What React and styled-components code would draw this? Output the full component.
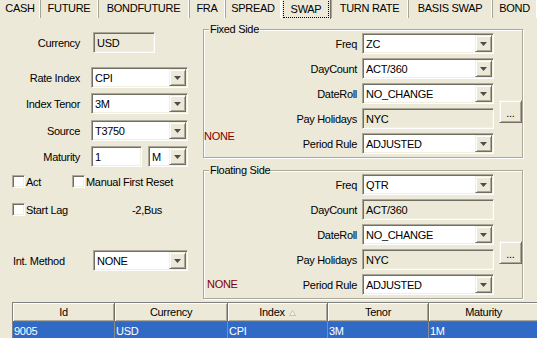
import React from "react";
import styled, { createGlobalStyle } from "styled-components";

const GlobalStyle = createGlobalStyle`
  html, body { margin: 0; padding: 0; background: #ECE9D8; }
  body {
    font-family: "Liberation Sans", Arial, sans-serif;
    font-size: 11px;
    color: #000;
  }
`;

const Window = styled.div`
  width: 537px;
  height: 338px;
  overflow: hidden;
  background: #ECE9D8;
  display: flex;
  flex-direction: column;
  letter-spacing: -0.3px;
`;

/* ---------- tabs ---------- */
const TabStrip = styled.div`
  display: flex;
  height: 19px;
  flex-shrink: 0;
`;

const Tab = styled.div`
  flex: 0 0 ${(p) => p.$w}px;
  box-sizing: border-box;
  height: ${(p) => (p.$selected ? 19 : 18)}px;
  display: flex;
  align-items: center;
  justify-content: center;
  padding-bottom: 2px;
  border-left: 1px solid ${(p) => (p.$first ? "transparent" : p.$selected ? "#fff" : "#A7A593")};
  border-right: 1px solid ${(p) => (p.$selected ? "#716F64" : "#fff")};
  white-space: nowrap;
`;

const Focus = styled.span`
  box-sizing: border-box;
  width: calc(100% - 2px);
  height: 17px;
  margin-top: 1px;
  border: 1px dotted #000;
  border-top: none;
  display: flex;
  align-items: center;
  justify-content: center;
`;

/* ---------- body ---------- */
const Body = styled.div`
  display: flex;
  height: 283px;
  flex-shrink: 0;
`;

const LeftPane = styled.div`
  width: 203px;
  flex-shrink: 0;
  display: flex;
  flex-direction: column;
`;

const FormRow = styled.div`
  display: flex;
  align-items: center;
  height: 21px;
  margin-top: ${(p) => p.$mt}px;
`;

const Label = styled.div`
  box-sizing: border-box;
  width: ${(p) => p.$w || 80}px;
  margin-right: ${(p) => (p.$left ? 0 : 11)}px;
  padding-left: ${(p) => (p.$left ? 13 : 0)}px;
  text-align: ${(p) => (p.$left ? "left" : "right")};
  white-space: nowrap;
`;

const sunken = `
  box-sizing: border-box;
  border: 1px solid;
  border-color: #ACA899 #fff #fff #ACA899;
  box-shadow: inset 1px 1px #716F64, inset -1px -1px #F1EFE2;
`;

const raised = `
  box-sizing: border-box;
  background: #ECE9D8;
  border: 1px solid;
  border-color: #F1EFE2 #716F64 #716F64 #F1EFE2;
  box-shadow: inset 1px 1px #fff, inset -1px -1px #ACA899;
`;

const TextBox = styled.div`
  ${sunken}
  width: ${(p) => p.$w}px;
  height: 21px;
  margin-left: ${(p) => p.$ml || 0}px;
  margin-right: ${(p) => p.$mr || 0}px;
  padding: 0 3px;
  display: flex;
  align-items: center;
  background: ${(p) => (p.$readOnly ? "#ECE9D8" : "#fff")};
  white-space: nowrap;
`;

const ComboBox = styled.div`
  ${sunken}
  width: ${(p) => p.$w}px;
  height: 21px;
  padding: 1px;
  display: flex;
  align-items: stretch;
  background: #fff;
`;

const ComboText = styled.div`
  flex: 1;
  padding-left: 2px;
  display: flex;
  align-items: center;
  white-space: nowrap;
  overflow: hidden;
`;

const DropButton = styled.div`
  ${raised}
  width: 17px;
  flex-shrink: 0;
  display: flex;
  align-items: center;
  justify-content: center;
`;

const Combo = ({ w, value }) => (
  <ComboBox $w={w}>
    <ComboText>{value}</ComboText>
    <DropButton>
      <svg width="7" height="4" viewBox="0 0 7 4">
        <polygon points="0,0 7,0 3.5,4" fill="#4D4D4D" />
      </svg>
    </DropButton>
  </ComboBox>
);

const CheckRow = styled.div`
  display: flex;
  align-items: center;
  height: 13px;
  padding-left: 12px;
  margin-top: ${(p) => p.$mt}px;
`;

const CheckItem = styled.div`
  display: flex;
  align-items: center;
  width: ${(p) => p.$w}px;
  white-space: nowrap;
`;

const CheckBox = styled.span`
  ${sunken}
  width: 13px;
  height: 13px;
  background: #fff;
  margin-right: 1px;
  flex-shrink: 0;
`;

const Check = ({ w, label }) => (
  <CheckItem $w={w}>
    <CheckBox />
    {label}
  </CheckItem>
);

/* ---------- group boxes ---------- */
const RightPane = styled.div`
  width: 320px;
  display: flex;
  flex-direction: column;
`;

const GroupBox = styled.div`
  position: relative;
  box-sizing: border-box;
  width: 320px;
  margin-top: ${(p) => p.$mt}px;
  border: 1px solid #ACA899;
  box-shadow: inset 1px 1px #fff, 1px 1px #fff;
  padding: 3px 0 3px 0;
`;

const Caption = styled.span`
  position: absolute;
  top: -7px;
  left: 5px;
  padding: 0 1px;
  line-height: 13px;
  background: #ECE9D8;
`;

const SideGrid = styled.div`
  display: grid;
  grid-template-columns: 1fr auto 132px 23px;
  grid-auto-rows: 21px;
  row-gap: 4px;
  column-gap: 5px;
`;

const SideLabel = styled.div`
  grid-column: 2;
  align-self: center;
  text-align: right;
  white-space: nowrap;
`;

const SideField = styled.div`
  grid-column: 3;
  display: flex;
`;

const NoneText = styled.div`
  grid-column: 1;
  grid-row: 5;
  align-self: ${(p) => (p.$lift ? "start" : "center")};
  margin-top: ${(p) => (p.$lift ? -3 : 0)}px;
  margin-left: ${(p) => p.$dx}px;
  color: #800000;
  line-height: 13px;
`;

const EllipsisButton = styled.div`
  ${raised}
  grid-column: 4;
  grid-row: 3 / span 2;
  align-self: end;
  margin-bottom: 6px;
  height: 23px;
  display: flex;
  align-items: center;
  justify-content: center;
  padding-top: 2px;
`;

/* ---------- grid table ---------- */
const Table = styled.div`
  margin-left: 12px;
  border-top: 1px solid #808080;
  border-left: 1px solid #808080;
  display: flex;
  flex-direction: column;
`;

const TableRow = styled.div`
  display: flex;
  height: ${(p) => p.$h}px;
  flex-shrink: 0;
`;

const HeadCell = styled.div`
  box-sizing: border-box;
  flex: 0 0 ${(p) => p.$w}px;
  background: #ECE9D8;
  border-right: 1px solid #716F64;
  border-bottom: 1px solid #716F64;
  box-shadow: inset 1px 1px #fff, inset -1px -1px #ACA899;
  display: flex;
  align-items: center;
  justify-content: center;
`;

const SortMark = styled.svg`
  margin-left: 4px;
  margin-top: 2px;
`;

const DataCell = styled.div`
  box-sizing: border-box;
  flex: 0 0 ${(p) => p.$w}px;
  background: #316AC5;
  color: #fff;
  border-right: 1px solid #8C8C8C;
  padding-left: 1px;
  display: flex;
  align-items: center;
`;

const tabs = [
  { label: "CASH", w: 40 },
  { label: "FUTURE", w: 58 },
  { label: "BONDFUTURE", w: 91 },
  { label: "FRA", w: 36 },
  { label: "SPREAD", w: 56 },
  { label: "SWAP", w: 50, selected: true },
  { label: "TURN RATE", w: 77 },
  { label: "BASIS SWAP", w: 84 },
  { label: "BOND", w: 45 },
];

const columns = [
  { title: "Id", w: 102, value: "9005" },
  { title: "Currency", w: 113, value: "USD" },
  { title: "Index", w: 100, value: "CPI", sorted: true },
  { title: "Tenor", w: 101, value: "3M" },
  { title: "Maturity", w: 110, value: "1M" },
];

const fixedRows = [
  { label: "Freq", value: "ZC" },
  { label: "DayCount", value: "ACT/360" },
  { label: "DateRoll", value: "NO_CHANGE" },
  { label: "Pay Holidays", value: "NYC", readOnly: true },
  { label: "Period Rule", value: "ADJUSTED" },
];

const floatingRows = [
  { label: "Freq", value: "QTR" },
  { label: "DayCount", value: "ACT/360", readOnly: true },
  { label: "DateRoll", value: "NO_CHANGE" },
  { label: "Pay Holidays", value: "NYC", readOnly: true },
  { label: "Period Rule", value: "ADJUSTED" },
];

const Side = ({ title, rows, mt, lift, dx }) => (
  <GroupBox $mt={mt}>
    <Caption>{title}</Caption>
    <SideGrid>
      {rows.map((r) => (
        <React.Fragment key={r.label}>
          <SideLabel>{r.label}</SideLabel>
          <SideField>
            {r.readOnly ? (
              <TextBox $w={132} $readOnly>
                {r.value}
              </TextBox>
            ) : (
              <Combo w={132} value={r.value} />
            )}
          </SideField>
        </React.Fragment>
      ))}
      <NoneText $lift={lift} $dx={dx}>
        NONE
      </NoneText>
      <EllipsisButton>...</EllipsisButton>
    </SideGrid>
  </GroupBox>
);

export default function App() {
  return (
    <>
      <GlobalStyle />
      <Window>
        <TabStrip>
          {tabs.map((t, i) => (
            <Tab key={t.label} $w={t.w} $selected={t.selected} $first={i === 0}>
              {t.selected ? <Focus>{t.label}</Focus> : t.label}
            </Tab>
          ))}
        </TabStrip>

        <Body>
          <LeftPane>
            <FormRow $mt={13}>
              <Label>Currency</Label>
              <TextBox $w={62} $ml={2} $readOnly>
                USD
              </TextBox>
            </FormRow>
            <FormRow $mt={14}>
              <Label>Rate Index</Label>
              <Combo w={97} value="CPI" />
            </FormRow>
            <FormRow $mt={5}>
              <Label>Index Tenor</Label>
              <Combo w={97} value="3M" />
            </FormRow>
            <FormRow $mt={6}>
              <Label>Source</Label>
              <Combo w={97} value="T3750" />
            </FormRow>
            <FormRow $mt={5}>
              <Label>Maturity</Label>
              <TextBox $w={51} $mr={6}>
                1
              </TextBox>
              <Combo w={40} value="M" />
            </FormRow>
            <CheckRow $mt={8}>
              <Check w={60} label="Act" />
              <Check w={120} label="Manual First Reset" />
            </CheckRow>
            <CheckRow $mt={15}>
              <Check w={120} label="Start Lag" />
              <span>-2,Bus</span>
            </CheckRow>
            <FormRow $mt={34}>
              <Label $left $w={93}>
                Int. Method
              </Label>
              <Combo w={95} value="NONE" />
            </FormRow>
          </LeftPane>

          <RightPane>
            <Side title="Fixed Side" rows={fixedRows} mt={10} lift dx={0} />
            <Side title="Floating Side" rows={floatingRows} mt={12} dx={3} />
          </RightPane>
        </Body>

        <Table>
          <TableRow $h={19}>
            {columns.map((c) => (
              <HeadCell key={c.title} $w={c.w}>
                {c.title}
                {c.sorted && (
                  <SortMark width="7" height="6" viewBox="0 0 7 6">
                    <polygon points="3.5,0.5 6.5,5.5 0.5,5.5" fill="#F4F3EE" stroke="#C5C2B2" strokeWidth="1" />
                  </SortMark>
                )}
              </HeadCell>
            ))}
          </TableRow>
          <TableRow $h={17}>
            {columns.map((c) => (
              <DataCell key={c.title} $w={c.w}>
                {c.value}
              </DataCell>
            ))}
          </TableRow>
        </Table>
      </Window>
    </>
  );
}
